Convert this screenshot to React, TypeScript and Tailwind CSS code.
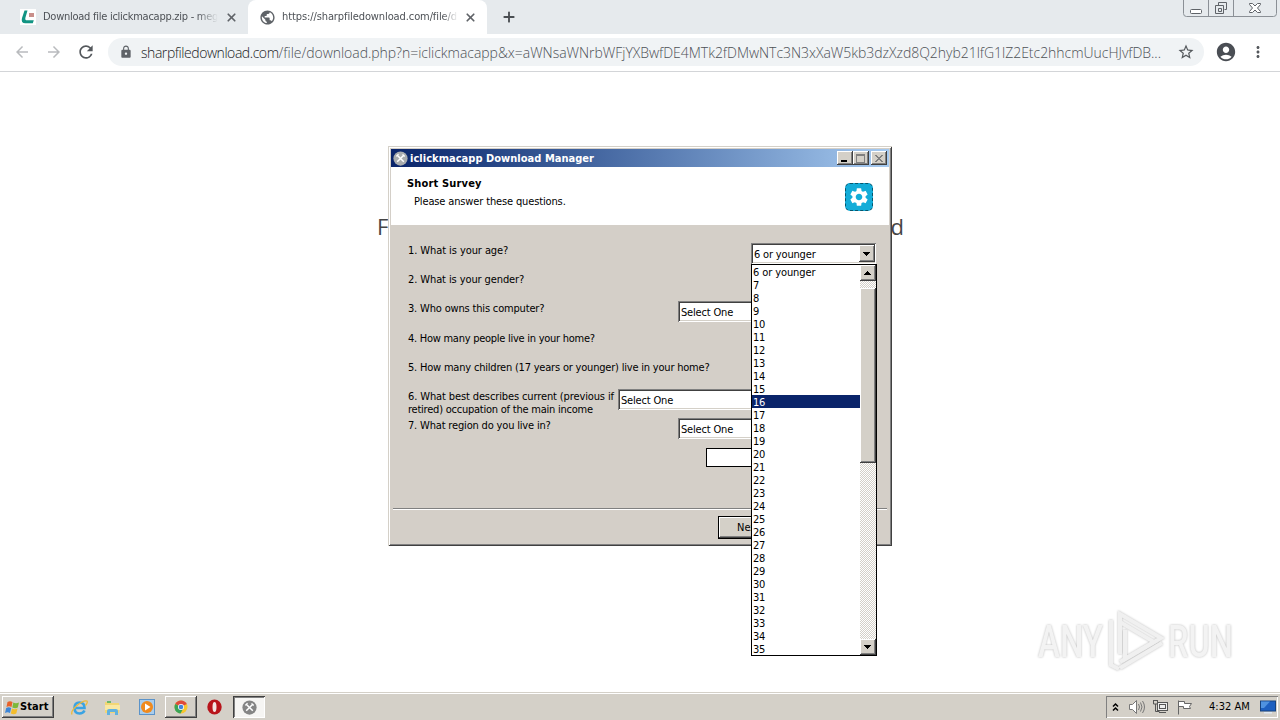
import type { ReactNode } from 'react';
import { ChevronsUp, X, Plus } from 'lucide-react';
import {
  MdArrowBack,
  MdArrowForward,
  MdRefresh,
  MdLock,
  MdStarBorder,
  MdAccountCircle,
  MdMoreVert,
  MdPublic,
  MdSettings,
} from 'react-icons/md';

const AGES = ['6 or younger', ...Array.from({ length: 29 }, (_, i) => String(i + 7))];
const SELECTED_AGE = '16';

const RAISED =
  'bg-[#d4d0c8] shadow-[inset_-1px_-1px_0_#404040,inset_1px_1px_0_#ffffff,inset_-2px_-2px_0_#808080]';
const SUNKEN =
  'bg-white shadow-[inset_1px_1px_0_#808080,inset_-1px_-1px_0_#ffffff,inset_2px_2px_0_#404040,inset_-2px_-2px_0_#d4d0c8]';
const DITHER =
  'bg-[repeating-conic-gradient(#ffffff_0_25%,#d4d0c8_0_50%)] bg-[length:2px_2px]';

function BrowserTabs() {
  return (
    <div className="flex h-[34px] items-start bg-[#e6eaed] text-[11px] text-[#4d5156]">
      <div className="flex h-[34px] w-[248px] items-center rounded-br-lg pl-5">
        <svg width="16" height="16" viewBox="0 0 16 16">
          <rect width="16" height="16" fill="#fff" />
          <path d="M4.500 1.500h3L5.400 8.700q-.7 2.600 1.800 2.600h6.600l-1 3H5.400Q.6 14.200 2 9z" fill="#129483" />
          <rect x="9" y="4" width="5" height="4" fill="#c98f8a" />
        </svg>
        <div className="ml-[7px] w-[175px] overflow-hidden whitespace-nowrap tracking-[-0.26px] [mask-image:linear-gradient(to_right,#000_88%,transparent)]">
          Download file iclickmacapp.zip - meg
        </div>
        <X className="ml-[7px] size-[13px] text-[#5f6368]" strokeWidth={3.2} />
      </div>
      <div className="flex h-[34px] w-[239px] items-center rounded-t-lg bg-white pl-[11px]">
        <MdPublic className="size-[17px] text-[#5f6368]" />
        <div className="ml-[6px] w-[176px] overflow-hidden whitespace-nowrap tracking-[-0.1px] [mask-image:linear-gradient(to_right,#000_91%,transparent)]">
          https://sharpfiledownload.com/file/d
        </div>
        <X className="ml-[6px] size-[13px] text-[#5f6368]" strokeWidth={3.2} />
      </div>
      <Plus className="mt-[9px] ml-[14px] size-4 text-[#4a4e52]" strokeWidth={2.8} />
      <svg className="mr-[3px] ml-auto" width="94" height="17" viewBox="0 0 94 17" fill="none">
        <path d="M.5 0v13.500q0 3 3 3h87q3 0 3-3V0M25.500 0v16M50.500 0v16" stroke="#8b9096" />
        <rect x="7.500" y="9.500" width="11" height="4" rx="1" fill="#fff" stroke="#5f6368" />
        <path d="M35.500 2.500h8v7h-2M32.500 5.500h8v8h-8zM35.500 8.500h3v3h-3zM35.500 5V2.500" stroke="#5f6368" />
        <path
          d="M66.500 3.500h3l2.500 2.500 2.500-2.500h3v1L74.500 8l3 3.500v1h-3L72 10l-2.500 2.500h-3v-1l3-3.500-3-3.500z"
          fill="#fff"
          stroke="#5f6368"
        />
      </svg>
    </div>
  );
}

function Toolbar() {
  return (
    <div className="flex h-[38px] items-center border-b border-[#d3d5d8] bg-white pb-px pl-[13px]">
      <MdArrowBack className="size-[18px] text-[#b9bbbe]" />
      <MdArrowForward className="ml-[14px] size-[18px] text-[#b9bbbe]" />
      <MdRefresh className="ml-[13px] size-5 text-[#54585c]" />
      <div className="ml-3 flex h-[28px] w-[1096px] items-center rounded-full bg-[#f0f3f5] pr-[9px] pl-[11px]">
        <MdLock className="size-[14px] text-[#5f6368]" />
        <div className="ml-2 flex w-[1040px] whitespace-nowrap font-['Open_Sans'] text-[14px] font-light text-[#4d5156] [font-stretch:normal]">
          <span className="tracking-[-0.44px] text-[#202124]">sharpfiledownload.com</span>
          <span className="tracking-[-0.03px]">
            /file/download.php?n=iclickmacapp&amp;x=aWNsaWNrbWFjYXBwfDE4MTk2fDMwNTc3N3xXaW5kb3dzXzd8Q2hyb21lfG1lZ2Etc2hhcmUucHJvfDB...
          </span>
        </div>
        <MdStarBorder className="-ml-[3px] size-[18px] shrink-0 text-[#54585c]" />
      </div>
      <MdAccountCircle className="ml-[11px] size-[22px] text-[#4a4e54]" />
      <MdMoreVert className="ml-[12px] size-[18px] text-[#54585c]" />
    </div>
  );
}

function ToolsIcon({ size, light }: { size: number; light?: boolean }) {
  return (
    <svg width={size} height={size} viewBox="0 0 16 16">
      <circle cx="8" cy="8" r="7.600" fill={light ? '#a9acae' : '#858585'} />
      <path d="M4.500 4.500l7 7M11.500 4.500l-7 7" stroke="#fff" strokeWidth="1.600" />
      <path d="M3.500 5.800l2.400-2.400M10.200 3.600l2.300 2.300" stroke="#fff" strokeWidth="1.300" />
    </svg>
  );
}

function Arrow({ up }: { up?: boolean }) {
  return (
    <svg className="mr-px" width="7" height="4" viewBox="0 0 7 4" shapeRendering="crispEdges">
      <path d={up ? 'M0 4L3.500 0L7 4z' : 'M0 0L3.500 4L7 0z'} />
    </svg>
  );
}

function TitleButton({ children }: { children: ReactNode }) {
  return (
    <div className={`flex h-[14px] w-4 items-center justify-center ${RAISED}`}>
      <svg width="10" height="9" viewBox="0 0 10 9" fill="none" shapeRendering="crispEdges">
        {children}
      </svg>
    </div>
  );
}

function Field({ label, field, tall }: { label: ReactNode; field?: ReactNode; tall?: boolean }) {
  return (
    <div className={`flex justify-between ${tall ? 'h-[30px]' : 'h-[29px]'}`}>
      <div className="pt-px whitespace-nowrap">{label}</div>
      {field}
    </div>
  );
}

function AgeList() {
  return (
    <div className="absolute top-[264px] left-[751px] flex h-[392px] w-[126px] border border-black bg-white text-[11px] leading-[15px]">
      <div className="w-[108px]">
        {AGES.map((age) => (
          <div
            key={age}
            className={`h-[13px] pl-px ${age === SELECTED_AGE ? 'bg-[#0a246a] text-white' : 'text-black'} ${age === AGES[0] ? 'tracking-[-0.1px]' : 'tracking-[-0.3px]'}`}
          >
            {age}
          </div>
        ))}
      </div>
      <div className={`flex w-4 flex-col ${DITHER}`}>
        <div className={`flex h-4 items-center justify-center ${RAISED}`}>
          <Arrow up />
        </div>
        <div className={`mt-[7px] h-[175px] ${RAISED}`} />
        <div className={`mt-auto flex h-4 items-center justify-center ${RAISED}`}>
          <Arrow />
        </div>
      </div>
    </div>
  );
}

function SurveyDialog() {
  return (
    <div className="absolute top-[146px] left-[388px] flex h-[400px] w-[504px] flex-col bg-[#d4cfc8] p-[3px] text-[11px] leading-[13px] text-black shadow-[inset_1px_1px_0_#d4d0c8,inset_-1px_-1px_0_#404040,inset_2px_2px_0_#ffffff,inset_-2px_-2px_0_#808080]">
      <div className="flex h-[18px] shrink-0 items-center bg-linear-to-r from-[#0a246a] to-[#a6caf0] pr-[2px] pl-[2px]">
        <ToolsIcon size={15} light />
        <div className="ml-[2px] flex-1 font-bold tracking-[0.03px] text-white">iclickmacapp Download Manager</div>
        <TitleButton>
          <path d="M1 7h6" stroke="#000" strokeWidth="2" />
        </TitleButton>
        <TitleButton>
          <path d="M.5 .5h8v8h-8zM.5 1.500h8" stroke="#808080" />
        </TitleButton>
        <div className="w-[2px]" />
        <TitleButton>
          <path d="M1.500 1l7 7M8.500 1l-7 7" stroke="#808080" strokeWidth="1.500" />
        </TitleButton>
      </div>

      <div className="flex h-[58px] shrink-0 justify-between bg-white pr-4 pl-4">
        <div className="pt-[10px]">
          <div className="font-bold tracking-[0.16px]">Short Survey</div>
          <div className="mt-[5px] ml-[7px] tracking-[-0.14px]">Please answer these questions.</div>
        </div>
        <div className="mt-4 flex size-7 items-center justify-center rounded-[5px] border border-dashed border-[#07566e] bg-[#13acd8]">
          <MdSettings className="size-[22px] text-white" />
        </div>
      </div>

      <div className="flex flex-1 flex-col pt-[18px] pr-[13px] pl-[17px] tracking-[-0.17px]">
        <Field
          label={<span className="tracking-[-0.08px]">1. What is your age?</span>}
          field={
            <div className={`flex h-[21px] w-[125px] justify-between py-[2px] pr-px pl-[3px] leading-[19px] ${SUNKEN}`}>
              6 or younger
              <div className={`flex h-[17px] w-4 items-center justify-center ${RAISED}`}>
                <Arrow />
              </div>
            </div>
          }
        />
        <Field label={<span className="tracking-[-0.1px]">2. What is your gender?</span>} />
        <Field
          label="3. Who owns this computer?"
          tall
          field={<div className={`h-[21px] w-[198px] pt-[2px] pl-[3px] leading-[19px] ${SUNKEN}`}>Select One</div>}
        />
        <Field label={<span className="tracking-[-0.26px]">4. How many people live in your home?</span>} />
        <Field
          label={
            <span className="tracking-[-0.2px]">5. How many children (17 years or younger) live in your home?</span>
          }
        />
        <Field
          label={
            <>
              <span className="tracking-[-0.12px]">6. What best describes current (previous if</span>
              <br />
              <span className="tracking-[-0.23px]">retired) occupation of the main income</span>
            </>
          }
          field={<div className={`h-[21px] w-[258px] pt-[2px] pl-[3px] leading-[19px] ${SUNKEN}`}>Select One</div>}
        />
        <Field
          label="7. What region do you live in?"
          tall
          field={<div className={`h-[21px] w-[198px] pt-[2px] pl-[3px] leading-[19px] ${SUNKEN}`}>Select One</div>}
        />
        <div className="h-[19px] w-[170px] self-end border border-black bg-white" />
      </div>

      <div className="mx-[2px] flex h-[35px] shrink-0 justify-end border-t border-[#808080] pt-[7px] pr-[94px] shadow-[inset_0_1px_0_#ffffff]">
        <div className="h-[23px] w-[75px] border border-black">
          <div className={`h-full pl-[18px] leading-[21px] ${RAISED}`}>Next &gt;</div>
        </div>
      </div>
    </div>
  );
}

function Watermark() {
  return (
    <div className="absolute top-[608px] left-[1038px] flex h-16 items-center font-['Roboto'] text-[44px] text-[#f3f3f3] [filter:drop-shadow(0_0_1px_#bbbbbb)] [font-stretch:normal]">
      <div className="mt-[3px] w-[66px] origin-left scale-x-[0.75] font-medium">ANY</div>
      <svg className="shrink-0" width="64" height="64" viewBox="0 0 64 64" fill="none" stroke="#f0f0f0" strokeWidth="4">
        <path d="M16 46V6l41 24L16 54" />
        <path d="M16 14l34 20-29 17V22" />
        <path d="M7 12v45l8 4M16 60l42-25" />
      </svg>
      <div className="mt-[3px] w-[66px] origin-left scale-x-[0.74] font-medium">RUN</div>
    </div>
  );
}

function Taskbar() {
  return (
    <div className="flex h-7 items-center bg-[#d4d0c8] pt-[3px] pr-[2px] pb-px pl-[2px] text-[11px] text-black shadow-[inset_0_1px_0_#d4d0c8,inset_0_2px_0_#ffffff]">
      <div className={`flex h-[22px] w-[52px] items-center pl-[3px] font-bold tracking-[0.1px] ${RAISED}`}>
        <svg width="15" height="15" viewBox="0 0 15 15">
          <path d="M2.500 2q2.500-1.500 5 0L6.500 7q-2.500-1.500-5 0z" fill="#e8622a" />
          <path d="M8.300 2.500q2.500 1.500 5.700 0L12.800 7.500q-2.500 1.500-5.500 0z" fill="#7db83a" />
          <path d="M1.200 8q2.500-1.500 5 0L5 13q-2.500-1.500-5 0z" fill="#3c86d8" />
          <path d="M7 8.500q2.500 1.500 5.500 0L11.300 13.500q-2.500 1.500-5.500 0z" fill="#f4bd2c" />
        </svg>
        Start
      </div>

      <svg className="ml-[17px]" width="17" height="17" viewBox="0 0 17 17" fill="none">
        <path d="M13.500 11.500q-1.500 3-5 3-5 0-5-5.500t5-5.500 5 5.500H5" stroke="#3aa3e3" strokeWidth="2.600" />
        <path d="M1 15.500Q-.5 12 6 6.500T16 2q1 1.500-1.500 4.500" stroke="#edb93a" strokeWidth="1.300" />
      </svg>
      <svg className="ml-4" width="17" height="17" viewBox="0 0 17 17">
        <path d="M1 3h5l1 1h8v10H1z" fill="#f2d675" />
        <path d="M3 2h4v2H3z" fill="#6db86a" />
        <path d="M1 6h15v5H1z" fill="#f9e8a3" />
        <path d="M3 16v-4q0-2 2-2h7q2 0 2 2v4h-3v-3H6v3z" fill="#62b2df" />
      </svg>
      <svg className="ml-[18px]" width="16" height="16" viewBox="0 0 16 16">
        <rect x=".5" y=".5" width="15" height="15" fill="#a9cdec" stroke="#5b93c9" />
        <circle cx="8" cy="8" r="6" fill="#f08a1d" />
        <path d="M6 4.500v7l5.500-3.500z" fill="#fff" />
      </svg>
      <div className={`ml-[10px] flex h-[22px] w-8 items-center justify-center ${RAISED}`}>
        <svg width="14" height="14" viewBox="0 0 14 14">
          <circle cx="7" cy="7" r="6.500" fill="#f8c72e" />
          <path d="M7 7L1.200 4A6.500 6.500 0 0 1 12.800 4z" fill="#de4a3c" />
          <path d="M7 7L1.200 4A6.500 6.500 0 0 0 6.500 13.500L9 9z" fill="#39a457" />
          <circle cx="7" cy="7" r="3" fill="#fff" />
          <circle cx="7" cy="7" r="2.300" fill="#4285dc" />
        </svg>
      </div>
      <svg className="ml-[10px]" width="15" height="16" viewBox="0 0 15 16">
        <ellipse cx="7.500" cy="8" rx="7.200" ry="7.500" fill="#b8141b" />
        <ellipse cx="7.500" cy="8" rx="2" ry="5" fill="#f3e5e2" />
      </svg>
      <div className="ml-[11px] flex h-[22px] w-8 items-center justify-center bg-[#f6f5f3] shadow-[inset_1px_1px_0_#404040,inset_-1px_-1px_0_#ffffff,inset_2px_2px_0_#808080]">
        <ToolsIcon size={15} />
      </div>

      <div className="ml-auto flex h-[22px] w-[172px] items-center pl-1 shadow-[inset_1px_1px_0_#808080,inset_-1px_-1px_0_#ffffff]">
        <svg width="11" height="11" viewBox="0 0 11 11" fill="none" stroke="#000" strokeWidth="1.500">
          <path d="M3 4.500L5.500 2 8 4.500M3 8.500L5.500 6 8 8.500" />
        </svg>
        <svg className="ml-[7px]" width="17" height="16" viewBox="0 0 17 16" fill="none" stroke="#777">
          <path d="M1.500 5.500h3l4-4v13l-4-4h-3z" fill="#fff" />
          <path d="M10.500 5q2 3 0 6M12.500 3.500q3 4.500 0 9M14.500 2q4 6 0 12" />
        </svg>
        <svg className="ml-[7px]" width="17" height="16" viewBox="0 0 17 16" fill="none" stroke="#555">
          <rect x="5.500" y="3.500" width="10" height="8" fill="#eee" />
          <path d="M7 13.500h7M1.500 1v4h4V1M3.500 5v7.500h4M2 1.500h3" />
          <rect x="7.500" y="5.500" width="6" height="4" />
        </svg>
        <svg className="ml-[7px]" width="17" height="16" viewBox="0 0 17 16" fill="none" stroke="#666">
          <path d="M2.500 1.500v14M2.500 2.500h6v2h7l-2 3 1 2h-7v-2h-5z" fill="#fff" />
        </svg>
        <div className="ml-[16px] w-[42px] whitespace-nowrap tracking-[0.03px]">4:32 AM</div>
        <svg className="ml-[9px]" width="16" height="14" viewBox="0 0 16 14">
          <rect x=".5" y="1" width="15" height="10" fill="#1d5fc0" stroke="#16427f" />
          <path d="M1 1.500h9L4 8H1z" fill="#4f92e0" />
          <rect x="4" y="12" width="8" height="1.500" fill="#dfe8f2" />
        </svg>
      </div>
    </div>
  );
}

export default function App() {
  return (
    <div className="relative flex h-[720px] w-[1280px] flex-col overflow-hidden bg-white font-['DejaVu_Sans_Condensed','DejaVu_Sans',sans-serif] [font-stretch:condensed]">
      <BrowserTabs />
      <Toolbar />
      <div className="flex flex-1 justify-between pt-[138px] pr-[376px] pl-[377px] font-['Open_Sans'] text-[22px] text-[#454545] [font-stretch:normal]">
        <span>F</span>
        <span>d</span>
      </div>
      <Taskbar />
      <Watermark />
      <SurveyDialog />
      <AgeList />
    </div>
  );
}
